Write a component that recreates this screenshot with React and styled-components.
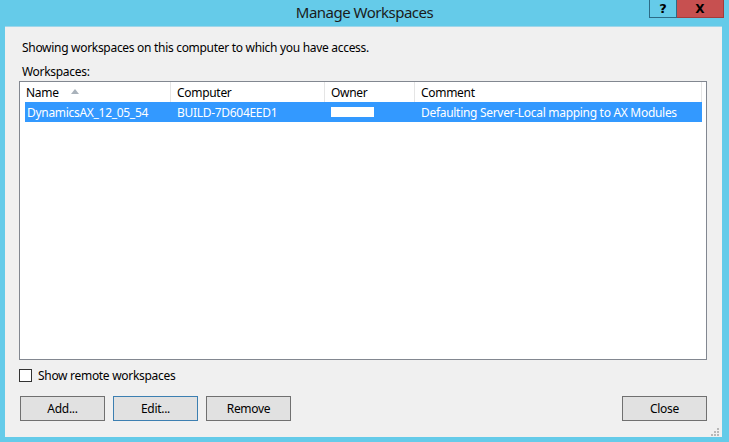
import styled, { createGlobalStyle } from 'styled-components';

const GlobalStyle = createGlobalStyle`
  html, body {
    margin: 0;
    padding: 0;
    background: #65cbe9;
  }
  * { box-sizing: border-box; }
`

const Window = styled.div`
  position: relative;
  width: 729px;
  height: 442px;
  background: #65cbe9;
  display: flex;
  flex-direction: column;
  font-family: "Noto Sans", "DejaVu Sans", sans-serif;
  font-size: 12px;
  letter-spacing: -0.3px;
  color: #000;
`

const TitleBar = styled.div`
  height: 26px;
  display: flex;
  align-items: center;
  justify-content: center;
`

const Title = styled.div`
  font-size: 15px;
  letter-spacing: -0.5px;
  color: #1b1b1b;
  margin-top: -3px;
`

const Caption = styled.div`
  position: absolute;
  top: 0;
  right: 5px;
  display: flex;
  height: 18px;
`

const CaptionButton = styled.div`
  width: ${p => p.$close ? '47px' : '28px'};
  height: 18px;
  display: flex;
  align-items: center;
  justify-content: center;
  font-family: "DejaVu Sans", sans-serif;
  font-weight: bold;
  letter-spacing: 0;
  font-size: ${p => p.$close ? '12px' : '13px'};
  background: ${p => p.$close ? '#c75050' : 'transparent'};
  border: 1px solid ${p => p.$close ? '#a23c3c' : '#2d6b86'};
  border-top: none;
  border-left: ${p => p.$close ? 'none' : '1px solid #2d6b86'};
  color: #000;
`

const Client = styled.div`
  position: relative;
  flex: 1;
  margin: 0 7px 5px 5px;
  background: #f0f0f0;
  border-top: 1px solid #9fd6ea;
  padding: 13px 15px 0 14px;
  display: flex;
  flex-direction: column;
`

const Label = styled.div`
  line-height: 16px;
  padding-left: 3px;
  margin-bottom: ${p => p.$gap || 0}px;
`

const ListBox = styled.div`
  height: 279px;
  border: 1px solid #828790;
  background: #fff;
  display: flex;
  flex-direction: column;
`

const HeaderRow = styled.div`
  display: grid;
  grid-template-columns: 151px 154px 90px 287px;
  height: 20px;
`

const HeaderCell = styled.div`
  position: relative;
  display: flex;
  align-items: center;
  padding-left: 6px;
  border-right: 1px solid #e5e5e5;
  color: #000;
`

const SortArrow = styled.span`
  width: 0;
  height: 0;
  margin-left: 12px;
  margin-bottom: 2px;
  border-left: 4.5px solid transparent;
  border-right: 4.5px solid transparent;
  border-bottom: 5px solid #a9b2bb;
`

const Row = styled.div`
  display: grid;
  grid-template-columns: 146px 154px 90px 282px;
  height: 20px;
  margin-left: 5px;
  width: 677px;
  background: ${p => p.$selected ? '#3399ff' : 'transparent'};
  color: ${p => p.$selected ? '#fff' : '#000'};
`

const Cell = styled.div`
  display: flex;
  align-items: center;
  padding-left: ${p => p.$first ? '2px' : '6px'};
  white-space: nowrap;
`

const Redacted = styled.span`
  display: block;
  width: 43px;
  height: 10px;
  background: #fff;
`

const CheckRow = styled.label`
  display: flex;
  align-items: center;
  gap: 6px;
  margin-top: 8px;
  height: 14px;
`

const Box = styled.span`
  width: 13px;
  height: 13px;
  border: 1px solid #333;
  background: #fff;
`

const ButtonBar = styled.div`
  display: flex;
  gap: 8px;
  margin-top: 14px;
  padding-left: 1px;
`

const Button = styled.div`
  width: 85px;
  height: 25px;
  display: flex;
  align-items: center;
  justify-content: center;
  background: #e1e1e1;
  border: 1px solid ${p => p.$focused ? '#3c7fb1' : '#707070'};
  margin-left: ${p => p.$push ? 'auto' : '0'};
`

const Grip = styled.svg`
  position: absolute;
  right: 3px;
  bottom: 1px;
`

const columns = ['Name', 'Computer', 'Owner', 'Comment'];

export default function App() {
  return (
    <Window>
      <GlobalStyle />
      <TitleBar>
        <Title>Manage Workspaces</Title>
      </TitleBar>
      <Caption>
        <CaptionButton>?</CaptionButton>
        <CaptionButton $close>X</CaptionButton>
      </Caption>
      <Client>
        <Label $gap={8}>Showing workspaces on this computer to which you have access.</Label>
        <Label $gap={1}>Workspaces:</Label>
        <ListBox>
          <HeaderRow>
            {columns.map((c, i) => (
              <HeaderCell key={c}>
                {c}
                {i === 0 && <SortArrow />}
              </HeaderCell>
            ))}
          </HeaderRow>
          <Row $selected>
            <Cell $first>DynamicsAX_12_05_54</Cell>
            <Cell>BUILD-7D604EED1</Cell>
            <Cell><Redacted /></Cell>
            <Cell>Defaulting Server-Local mapping to AX Modules</Cell>
          </Row>
        </ListBox>
        <CheckRow>
          <Box />
          Show remote workspaces
        </CheckRow>
        <ButtonBar>
          <Button>Add...</Button>
          <Button $focused>Edit...</Button>
          <Button>Remove</Button>
          <Button $push>Close</Button>
        </ButtonBar>
        <Grip width="9" height="9" viewBox="0 0 9 9">
          {[[7, 1], [4, 4], [7, 4], [1, 7], [4, 7], [7, 7]].map(([x, y]) => (
            <rect key={`${x}-${y}`} x={x} y={y} width="2" height="2" fill="#b8b8b8" />
          ))}
        </Grip>
      </Client>
    </Window>
  )
}
